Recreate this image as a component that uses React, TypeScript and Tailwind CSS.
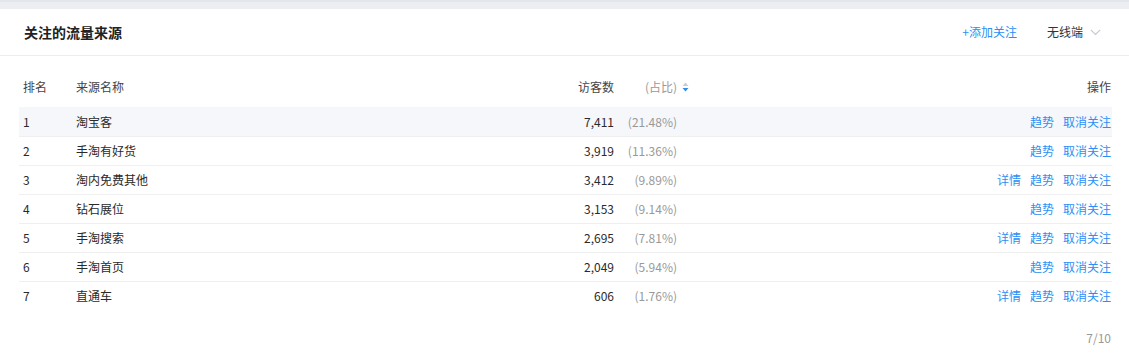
import React from "react";

const rows = [
  { rank: 1, name: "淘宝客", v: "7,411", p: "(21.48%)", detail: false },
  { rank: 2, name: "手淘有好货", v: "3,919", p: "(11.36%)", detail: false },
  { rank: 3, name: "淘内免费其他", v: "3,412", p: "(9.89%)", detail: true },
  { rank: 4, name: "钻石展位", v: "3,153", p: "(9.14%)", detail: false },
  { rank: 5, name: "手淘搜索", v: "2,695", p: "(7.81%)", detail: true },
  { rank: 6, name: "手淘首页", v: "2,049", p: "(5.94%)", detail: false },
  { rank: 7, name: "直通车", v: "606", p: "(1.76%)", detail: true },
];

export default function App() {
  return (
    <div
      className="w-[1129px] h-[355px] bg-white overflow-hidden text-[12px] text-[#2a2a2a]"
      style={{ fontFamily: '"Noto Sans CJK SC", "Noto Sans", sans-serif' }}
    >
      <div className="h-[9px] bg-[#eceef2] border-t-2 border-[#e3e6eb]" />
      <div className="h-[47px] border-b border-[#ececec] flex items-center pl-[24px] pr-[28px]">
        <div className="text-[14px] font-bold text-[#222] leading-[20px]">关注的流量来源</div>
        <div className="flex-1" />
        <div className="text-[#2b8ff5] leading-[18px]">+添加关注</div>
        <div className="ml-[30px] flex items-center leading-[18px] text-[#333]">
          无线端
          <svg width="11" height="7" viewBox="0 0 11 7" className="ml-[7px]">
            <path d="M0.8 0.8 L5.5 5.5 L10.2 0.8" fill="none" stroke="#c3cad4" strokeWidth="1.2" />
          </svg>
        </div>
      </div>
      <div className="pl-[19px] pr-[17px] pt-[16px]">
        <div className="h-[30px] flex items-center pl-[4px] text-[#444] leading-[16px]">
          <div className="w-[53px]">排名</div>
          <div className="w-[438px]">来源名称</div>
          <div className="w-[100px] text-right">访客数</div>
          <div className="w-[63px] text-right text-[#999] relative">
            (占比)
            <svg width="7" height="10" viewBox="0 0 7 10" className="absolute right-[-12px] top-[3px]">
              <path d="M0.5 4 L3.5 0.5 L6.5 4 Z" fill="#c8ccd4" />
              <path d="M0.5 6 L3.5 9.5 L6.5 6 Z" fill="#2b8ff5" />
            </svg>
          </div>
          <div className="flex-1 text-right pr-[1px]">操作</div>
        </div>
        <div className="mt-[5px]">
          {rows.map((r, i) => (
            <div
              key={r.rank}
              className={
                "h-[29px] flex items-center pl-[4px] leading-[16px] " +
                (i > 0 ? "border-t border-[#efefef] " : "") +
                (i === 0 ? "bg-[#f5f7fb]" : "")
              }
            >
              <div className="w-[53px]">{r.rank}</div>
              <div className="w-[438px]">{r.name}</div>
              <div className="w-[100px] text-right">{r.v}</div>
              <div className="w-[63px] text-right text-[#999]">{r.p}</div>
              <div className="flex-1 flex justify-end gap-[9px] text-[#2b8ff5] pr-[1px]">
                {r.detail && <span>详情</span>}
                <span>趋势</span>
                <span>取消关注</span>
              </div>
            </div>
          ))}
        </div>
        <div className="mt-[20px] h-[16px] leading-[16px] text-right text-[#999] pr-[1px]">7/10</div>
      </div>
    </div>
  );
}
